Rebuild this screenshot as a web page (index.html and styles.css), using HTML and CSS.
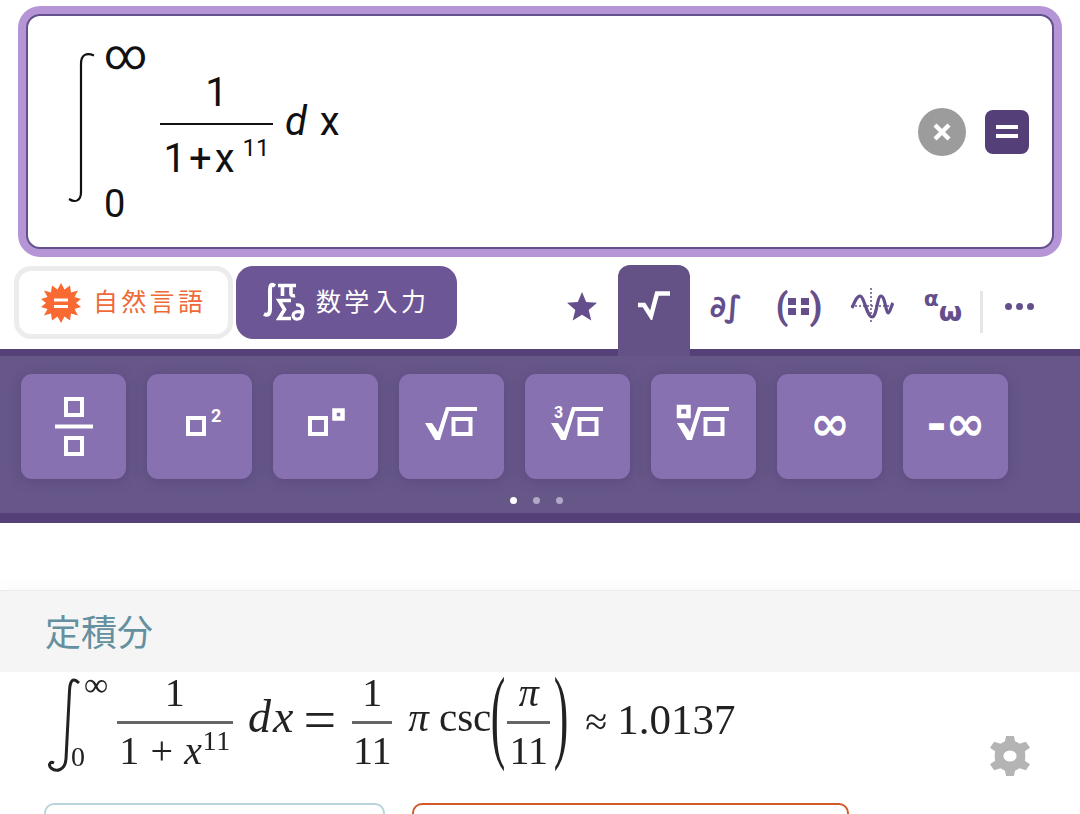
FILE: index.html
```html
<!DOCTYPE html>
<html lang="ja">
<head>
<meta charset="utf-8">
<title>定積分</title>
<link rel="stylesheet" href="styles.css">
</head>
<body>
<div class="page">
  <div class="input-outer">
    <div class="input-inner">
      <div class="entry">
        <svg class="big-int" width="28" height="152" viewBox="0 0 28 152"><path d="M26 3.500C19 0.500 13 2 13 12V140C13 149 7 151 1 147" fill="none" stroke="#111" stroke-width="2.200"/></svg>
        <div class="limits"><span class="lim-top">∞</span><span class="lim-bot">0</span></div>
        <div class="frac">
          <span class="num">1</span>
          <span class="den">1<span class="plus">+</span>x<sup class="sup">11</sup></span>
        </div>
        <span class="dx"><i>d</i> x</span>
      </div>
      <div class="input-actions">
        <span class="clear"><svg width="22" height="22" viewBox="0 0 22 22"><path d="M4 4L18 18M18 4L4 18" stroke="#fff" stroke-width="4.400"/></svg></span>
        <span class="equals"><svg width="24" height="16" viewBox="0 0 24 16"><path d="M1 3H23M1 12H23" stroke="#fff" stroke-width="4"/></svg></span>
      </div>
    </div>
  </div>

  <div class="mode-row">
    <div class="mode mode-nl">
      <svg class="burst" width="40" height="40" viewBox="0 0 40 40"><polygon fill="#f96932" points="20,0 23.500,6.500 29,2.500 30,9.500 37,7.500 33.500,14 40,16 35,20 40,24 33.500,26 37,32.500 30,30.500 29,37.500 23.500,33.500 20,40 16.500,33.500 11,37.500 10,30.500 3,32.500 6.500,26 0,24 5,20 0,16 6.500,14 3,7.500 10,9.500 11,2.500 16.500,6.500"/><path d="M13 17H27M13 23.500H27" stroke="#fff" stroke-width="2.800"/></svg>
      <span class="mode-label">自然言語</span>
    </div>
    <div class="mode mode-math">
      <svg class="math-logo" width="42" height="40" viewBox="0 0 42 40"><g fill="none" stroke="#fff"><path stroke-width="4" d="M12 4C8 1 7 4 7 8V27C7 32 5 34 1 32"/><path stroke-width="3.600" d="M15 3.500H33M19.500 4V14M28 4V12C28 14 30 14 32 13.500"/><path stroke-width="3.600" d="M28 18.500H16L21.500 27.500L16 36.500H28"/><path stroke-width="3.200" d="M33 23C39 22 41 27 39 33C38 38 32 38 30.500 35C29 31 33 28 39.500 30.500"/></g></svg>
      <span class="mode-label">数学入力</span>
    </div>
    <div class="tabs">
      <span class="tab t-star"><svg width="32" height="31" viewBox="0 0 32 31"><polygon fill="#644f8c" points="16,1 20.200,11 31,11.800 22.700,18.900 25.300,29.500 16,23.800 6.700,29.500 9.300,18.900 1,11.800 11.800,11"/></svg></span>
      <span class="tab tab-on"><svg width="36" height="30" viewBox="0 0 36 30"><path d="M2 15H8L15 26L21 3.500H34" fill="none" stroke="#fff" stroke-width="4.500"/></svg></span>
      <span class="tab t-calc">∂∫</span>
      <span class="tab t-mat"><span>(</span><svg class="mat-dots" width="23" height="20" viewBox="0 0 23 20"><path fill="#644f8c" d="M1 2h8v7H1zM14 2h8v7h-8zM1 12h8v7H1zM14 12h8v7h-8z"/></svg><span>)</span></span>
      <span class="tab t-wave"><svg width="44" height="38" viewBox="0 0 44 38"><path d="M21 1V37M1 19H43" stroke="#644f8c" stroke-width="1.500" stroke-dasharray="2 2"/><path d="M2 21C5 14 7 9 10 9C14 9 17 30 22 30C27 30 27 9 31 9C35 9 36 26 38 26C40 26 41 19 43 16" fill="none" stroke="#644f8c" stroke-width="3.200"/></svg></span>
      <span class="tab t-greek"><span class="ga">α</span><span class="go">ω</span></span>
      <span class="tab-div"></span>
      <span class="tab t-more"><i></i><i></i><i></i></span>
    </div>
  </div>

  <div class="panel">
    <div class="keys">
      <span class="key"><svg width="105" height="105" viewBox="0 0 105 105"><path class="ic" d="M45 25h16v16H45zM45 64h16v16H45z"/><path class="ic" d="M34 52.500H72"/></svg></span>
      <span class="key"><svg width="105" height="105" viewBox="0 0 105 105"><path class="ic" d="M41 44h16v16H41z"/><text class="ic-num" x="64" y="48">2</text></svg></span>
      <span class="key"><svg width="105" height="105" viewBox="0 0 105 105"><path class="ic" d="M37 44h16v16H37z"/><path class="ic-t" d="M61.500 36.500h8v8h-8z"/></svg></span>
      <span class="key"><svg width="105" height="105" viewBox="0 0 105 105"><path class="ic-s" d="M26 49h7l6 9L47 33H78V37H50L41 66H36Z"/><path class="ic" d="M54.500 45h17v15h-17z"/></svg></span>
      <span class="key"><svg width="105" height="105" viewBox="0 0 105 105"><path class="ic-s" d="M26 49h7l6 9L47 33H78V37H50L41 66H36Z"/><path class="ic" d="M54.500 45h17v15h-17z"/><text class="ic-num3" x="29" y="44">3</text></svg></span>
      <span class="key"><svg width="105" height="105" viewBox="0 0 105 105"><path class="ic-s" d="M26 49h7l6 9L47 33H78V37H50L41 66H36Z"/><path class="ic" d="M54.500 45h17v15h-17z"/><path class="ic-t" d="M28 33h9.500v9H28z"/></svg></span>
      <span class="key key-txt">∞</span>
      <span class="key key-txt">-∞</span>
    </div>
    <div class="dots"><i class="dot-on"></i><i></i><i></i></div>
  </div>

  <section class="result">
    <h2 class="result-title">定積分</h2>
    <div class="result-body">
      <div class="solution">
        <svg class="s-int" width="34" height="96" viewBox="0 0 34 96"><path d="M33 6C27 0 24 3 23.500 14L20 82C19 94 10 95 5 91C2 88 4 84 8 86" fill="none" stroke="#222" stroke-width="3"/></svg>
        <div class="s-lim"><span>∞</span><span class="s-zero">0</span></div>
        <div class="s-frac s-f1"><span>1</span><span>1 + <i>x</i><sup>11</sup></span></div>
        <span class="s-txt s-dx"><i>dx</i></span>
        <span class="s-eq">=</span>
        <div class="s-frac s-f2"><span>1</span><span>11</span></div>
        <span class="s-txt s-csc"><i>π</i> csc</span>
        <span class="s-paren s-open">(</span>
        <div class="s-frac s-f3"><span><i>π</i></span><span>11</span></div>
        <span class="s-paren s-close">)</span>
        <span class="s-approx">≈</span>
        <span class="s-val">1.0137</span>
      </div>
      <svg class="gear" width="40" height="40" viewBox="2.300 0.500 19.400 23" preserveAspectRatio="none"><path fill="#b4b4b4" fill-rule="evenodd" d="M13.900 0.500L14.500 3.700C15.300 4 16 4.400 16.600 4.900L19.700 3.800L21.700 7.200L19.200 9.300C19.300 9.700 19.400 10.500 19.400 12C19.400 12.500 19.300 14.300 19.200 14.700L21.700 16.800L19.700 20.200L16.600 19.100C16 19.600 15.300 20 14.500 20.300L13.900 23.500H10.100L9.500 20.300C8.700 20 8 19.600 7.400 19.100L4.300 20.200L2.300 16.800L4.800 14.700C4.700 14.300 4.600 12.500 4.600 12C4.600 10.500 4.700 9.700 4.800 9.300L2.300 7.200L4.300 3.800L7.400 4.900C8 4.400 8.700 4 9.500 3.700L10.100 0.500ZM12 8.800A3.200 3.200 0 1 0 12 15.200A3.200 3.200 0 1 0 12 8.800Z"/></svg>
    </div>
    <div class="result-btns">
      <span class="rb rb-a"></span>
      <span class="rb rb-b"></span>
    </div>
  </section>
</div>
</body>
</html>
```

FILE: styles.css
```css
* { box-sizing: border-box; }
html, body { margin: 0; padding: 0; background: #fff; }
.page { width: 1080px; height: 814px; overflow: hidden; font-family: Roboto, "Noto Sans CJK JP", sans-serif; padding-top: 6px; }

.input-outer { margin: 0 18px; height: 251px; background: #b595d6; border-radius: 22px; padding: 8px; }
.input-inner { height: 100%; background: #fff; border: 2px solid #63508c; border-radius: 14px; display: flex; align-items: center; justify-content: space-between; padding: 0 23px 0 40px; }
.entry { display: flex; align-items: center; color: #111; height: 100%; }
.big-int { margin-top: -8px; margin-right: 8px; flex: none; }
.limits { display: flex; flex-direction: column; justify-content: space-between; height: 184px; width: 56px; margin-top: 4px; }
.lim-top { font-size: 42px; line-height: 36px; margin-top: -5px; }
.lim-bot { font-size: 38px; line-height: 44px; }
.frac { display: flex; flex-direction: column; align-items: center; width: 113px; margin-top: -11px; }
.num { font-size: 40px; line-height: 47px; width: 100%; text-align: center; border-bottom: 2px solid #111; height: 56px; }
.den { font-size: 40px; line-height: 48px; margin-top: 10px; white-space: nowrap; display: flex; align-items: flex-start; height: 48px; }
.plus { margin: 0 3px; }
.sup { font-size: 24px; line-height: 28px; margin: -1px 0 0 8px; vertical-align: baseline; }
.dx { font-size: 40px; margin-left: 12px; margin-top: -21px; word-spacing: 3px; }

.input-actions { display: flex; align-items: center; gap: 19px; }
.clear { width: 48px; height: 48px; border-radius: 50%; background: #9c9c9c; display: flex; align-items: center; justify-content: center; }
.equals { width: 44px; height: 44px; border-radius: 8px; background: #553f78; display: flex; align-items: center; justify-content: center; }

.mode-row { height: 92px; display: flex; align-items: flex-start; padding: 9px 0 0 14px; }
.mode { height: 73px; border-radius: 17px; display: flex; align-items: center; font-size: 25px; letter-spacing: 3.300px; white-space: nowrap; }
.mode-label { margin-top: -5px; }
.mode-nl { width: 219px; border: 5px solid #ececec; color: #ee6a36; padding-left: 22px; gap: 12px; }
.mode-math { width: 221px; margin-left: 3px; background: #6d5695; color: #fff; padding-left: 27px; gap: 11px; }
.math-logo { flex: none; margin-top: -2px; }

.tabs { display: flex; align-items: flex-start; margin-left: 109px; height: 92px; position: relative; flex: 1; }
.tab { display: flex; align-items: center; justify-content: center; color: #644f8c; font-weight: 700; flex: none; }
.t-star { width: 32px; height: 80px; }
.tab-on { width: 72px; height: 91px; margin-left: 20px; margin-top: -1px; background: #645287; border-radius: 12px 12px 0 0; padding-bottom: 11px; position: relative; z-index: 2; }
.t-calc { width: 32px; height: 80px; margin-left: 19px; font-size: 30px; font-family: "DejaVu Sans", sans-serif; letter-spacing: -2px; white-space: nowrap; }
.t-mat { width: 46px; height: 80px; margin-left: 35px; font-size: 37px; font-family: Roboto, sans-serif; gap: 0; }
.mat-dots { flex: none; margin: 0 -1px; }
.t-wave { width: 44px; height: 80px; margin-left: 28px; }
.t-greek { width: 40px; height: 80px; margin-left: 29px; font-family: "DejaVu Sans", sans-serif; align-items: flex-start; padding-top: 21px; }
.ga { font-size: 22px; line-height: 24px; }
.go { font-size: 27px; line-height: 24px; margin-top: 13px; }
.tab-div { width: 3px; height: 42px; background: #e6e6e6; margin: 25px 0 0 17px; }
.t-more { width: 32px; height: 80px; margin-left: 20px; gap: 4px; }
.t-more i { width: 7px; height: 7px; border-radius: 50%; background: #644f8c; }

.panel { height: 174px; background: #675789; border-top: 7px solid #554077; border-bottom: 10px solid #554077; padding: 18px 21px 0; }
.keys { display: flex; gap: 21px; }
.key { width: 105px; height: 105px; border-radius: 11px; background: #8871b0; box-shadow: 0 2px 14px rgba(60, 40, 100, .3); flex: none; display: flex; align-items: center; justify-content: center; }
.key-txt { color: #fff; font: 700 48px/1 "DejaVu Sans", sans-serif; padding-bottom: 8px; letter-spacing: -1px; }
.ic { fill: none; stroke: #fff; stroke-width: 4; }
.ic-t { fill: none; stroke: #fff; stroke-width: 4.500; }
.ic-s { fill: #fff; }
.ic-num { fill: #fff; font: 700 18px Roboto, sans-serif; }
.ic-num3 { fill: #fff; font: 700 16px Roboto, sans-serif; }
.dots { display: flex; justify-content: center; gap: 16px; margin: 18px 0 0 -7px; }
.dots i { width: 7px; height: 7px; border-radius: 50%; background: #b3a7c8; margin-top: 0; }
.dots .dot-on { background: #fff; }

.result { margin-top: 67px; box-shadow: 0 -6px 14px rgba(0, 0, 0, .025); }
.result-title { margin: 0; height: 82px; padding: 14px 0 0 45px; background: #f5f5f5; border-top: 1px solid #ebebeb; color: #64909f; font-size: 36px; font-weight: 400; line-height: 50px; font-family: "Noto Sans CJK JP", sans-serif; }
.result-body { height: 131px; padding-left: 46px; display: flex; align-items: flex-start; position: relative; }
.solution { display: flex; align-items: center; height: 103px; color: #222; font-family: "Liberation Serif", serif; filter: blur(.55px); }
.s-int { margin-top: 2px; flex: none; }
.s-lim { display: flex; flex-direction: column; justify-content: space-between; height: 92px; width: 30px; margin-left: 4px; font-size: 34px; line-height: 26px; }
.s-lim span:first-child { margin-top: -6px; }
.s-zero { margin: 0 0 0 -13px; font-size: 28px; }
.s-frac { display: flex; flex-direction: column; align-items: center; font-size: 40px; }
.s-frac span { display: block; text-align: center; width: 100%; height: 49px; white-space: nowrap; }
.s-frac span:first-child { border-bottom: 3px solid #666; line-height: 36px; }
.s-frac span:last-child { line-height: 53px; }
.s-frac sup { font-size: 28px; line-height: 0; }
.s-f1 { width: 116px; margin-left: 3px; letter-spacing: .6px; }
.s-f2 { width: 40px; margin-left: 16px; }
.s-f3 { width: 43px; }
.s-txt { white-space: nowrap; }
.s-dx { font-size: 46px; margin: -14px 0 0 15px; letter-spacing: 2px; }
.s-eq { font-size: 58px; margin: -8px 0 0 8px; }
.s-csc { font-size: 41px; margin: -14px 0 0 16px; }
.s-paren { font-size: 104px; font-weight: 400; line-height: 100px; transform: scaleX(.42); width: 16px; display: flex; justify-content: center; margin-top: -20px; }
.s-open { margin-left: -1px; margin-right: 1px; }
.s-close { margin-left: 3px; margin-right: 1px; }
.s-approx { font-size: 40px; margin: -4px 0 0 15px; }
.s-val { font-size: 43px; margin-left: 10px; margin-top: -8px; }
.gear { position: absolute; left: 990px; top: 64px; }
.result-btns { display: flex; gap: 27px; padding-left: 44px; margin-top: 0; }
.rb { display: block; height: 40px; border-radius: 10px; background: #fff; }
.rb-a { width: 341px; border: 2px solid #b7d3dc; }
.rb-b { width: 437px; border: 2px solid #d2592a; }
```
